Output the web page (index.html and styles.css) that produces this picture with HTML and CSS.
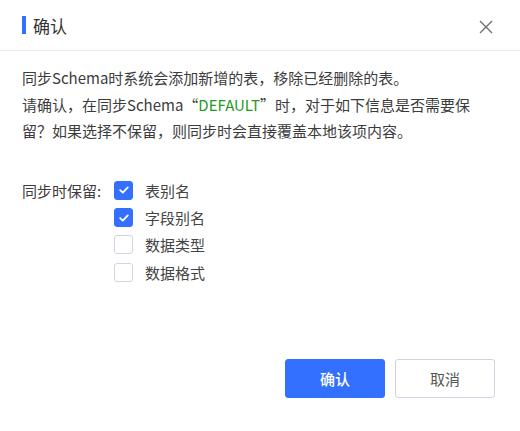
FILE: index.html
```html
<!DOCTYPE html>
<html lang="zh-CN">
<head>
	<meta charset="UTF-8">
	<title>确认</title>
	<link rel="stylesheet" href="styles.css">
</head>
<body>
	<div class="dialog">
		<div class="dialog-header">
			<span class="title-bar"></span>
			<h2 class="dialog-title">确认</h2>
			<a class="dialog-close">
				<svg width="14" height="14" viewBox="0 0 14 14"><path d="M1 1L13 13M13 1L1 13" stroke="#6b6b6b" stroke-width="1.3" fill="none"/></svg>
			</a>
		</div>
		<div class="dialog-body">
			<p class="tips">同步Schema时系统会添加新增的表，移除已经删除的表。<br>请确认，在同步Schema“<span class="schema-name">DEFAULT</span>”时，对于如下信息是否需要保留？如果选择不保留，则同步时会直接覆盖本地该项内容。</p>
			<div class="keep-form">
				<div class="keep-label">同步时保留:</div>
				<ul class="keep-list">
					<li><span class="checkbox checked"><svg width="12" height="12" viewBox="0 0 12 12"><path d="M2.2 6.2L4.8 8.6L9.8 3.4" stroke="#fff" stroke-width="1.8" fill="none" stroke-linecap="round" stroke-linejoin="round"/></svg></span>表别名</li>
					<li><span class="checkbox checked"><svg width="12" height="12" viewBox="0 0 12 12"><path d="M2.2 6.2L4.8 8.6L9.8 3.4" stroke="#fff" stroke-width="1.8" fill="none" stroke-linecap="round" stroke-linejoin="round"/></svg></span>字段别名</li>
					<li><span class="checkbox"></span>数据类型</li>
					<li><span class="checkbox"></span>数据格式</li>
				</ul>
			</div>
		</div>
		<div class="dialog-footer">
			<button class="btn btn-primary">确认</button>
			<button class="btn btn-default">取消</button>
		</div>
	</div>
</body>
</html>
```

FILE: styles.css
```css
*{
	box-sizing: border-box;
	font-family: "Noto Sans CJK SC", "Noto Sans", sans-serif;
}

body{
	margin: 0;
	background-color: #fff;
}

.dialog{
	display: flex;
	flex-direction: column;
	width: 520px;
	height: 431px;
	background-color: #fff;
}

.dialog-header{
	display: flex;
	align-items: center;
	height: 51px;
	padding: 0 27px 0 22px;
	border-bottom: 1px solid #e8e8f0;
}

.title-bar{
	width: 4px;
	height: 18px;
	background-color: #3370ff;
	margin-right: 7px;
}

.dialog-title{
	flex-grow: 1;
	margin: 0;
	font-size: 17px;
	font-weight: 400;
	color: #333;
	line-height: 1;
}

.dialog-close{
	display: flex;
	margin-top: 3px;
}

.dialog-body{
	padding: 14px 40px 0 22px;
}

.tips{
	margin: 0;
	font-size: 15px;
	line-height: 26.5px;
	color: #3c3c3c;
}

.schema-name{
	color: #1f9a1f;
}

.keep-form{
	display: flex;
	margin-top: 32px;
	font-size: 15px;
	color: #3c3c3c;
}

.keep-label{
	width: 92px;
	line-height: 27px;
}

.keep-list{
	list-style: none;
	margin: 0;
	padding: 0;
}

.keep-list li{
	display: flex;
	align-items: center;
	height: 27.4px;
	color: #444;
}

.checkbox{
	display: flex;
	align-items: center;
	justify-content: center;
	width: 19px;
	height: 19px;
	margin-right: 12px;
	border: 1px solid #d4d4e4;
	border-radius: 3px;
	background-color: #fff;
}

.checkbox.checked{
	background-color: #3370ff;
	border-color: #3370ff;
}

.dialog-footer{
	display: flex;
	justify-content: flex-end;
	gap: 10px;
	margin-top: auto;
	padding: 0 25px 33px 0;
}

.btn{
	width: 100px;
	height: 39px;
	border-radius: 3px;
	font-size: 15px;
	cursor: pointer;
}

.btn-primary{
	background-color: #3370ff;
	border: 1px solid #3370ff;
	color: #fff;
	font-weight: 500;
}

.btn-default{
	background-color: #fff;
	border: 1px solid #d2d2e2;
	color: #555;
}
```
